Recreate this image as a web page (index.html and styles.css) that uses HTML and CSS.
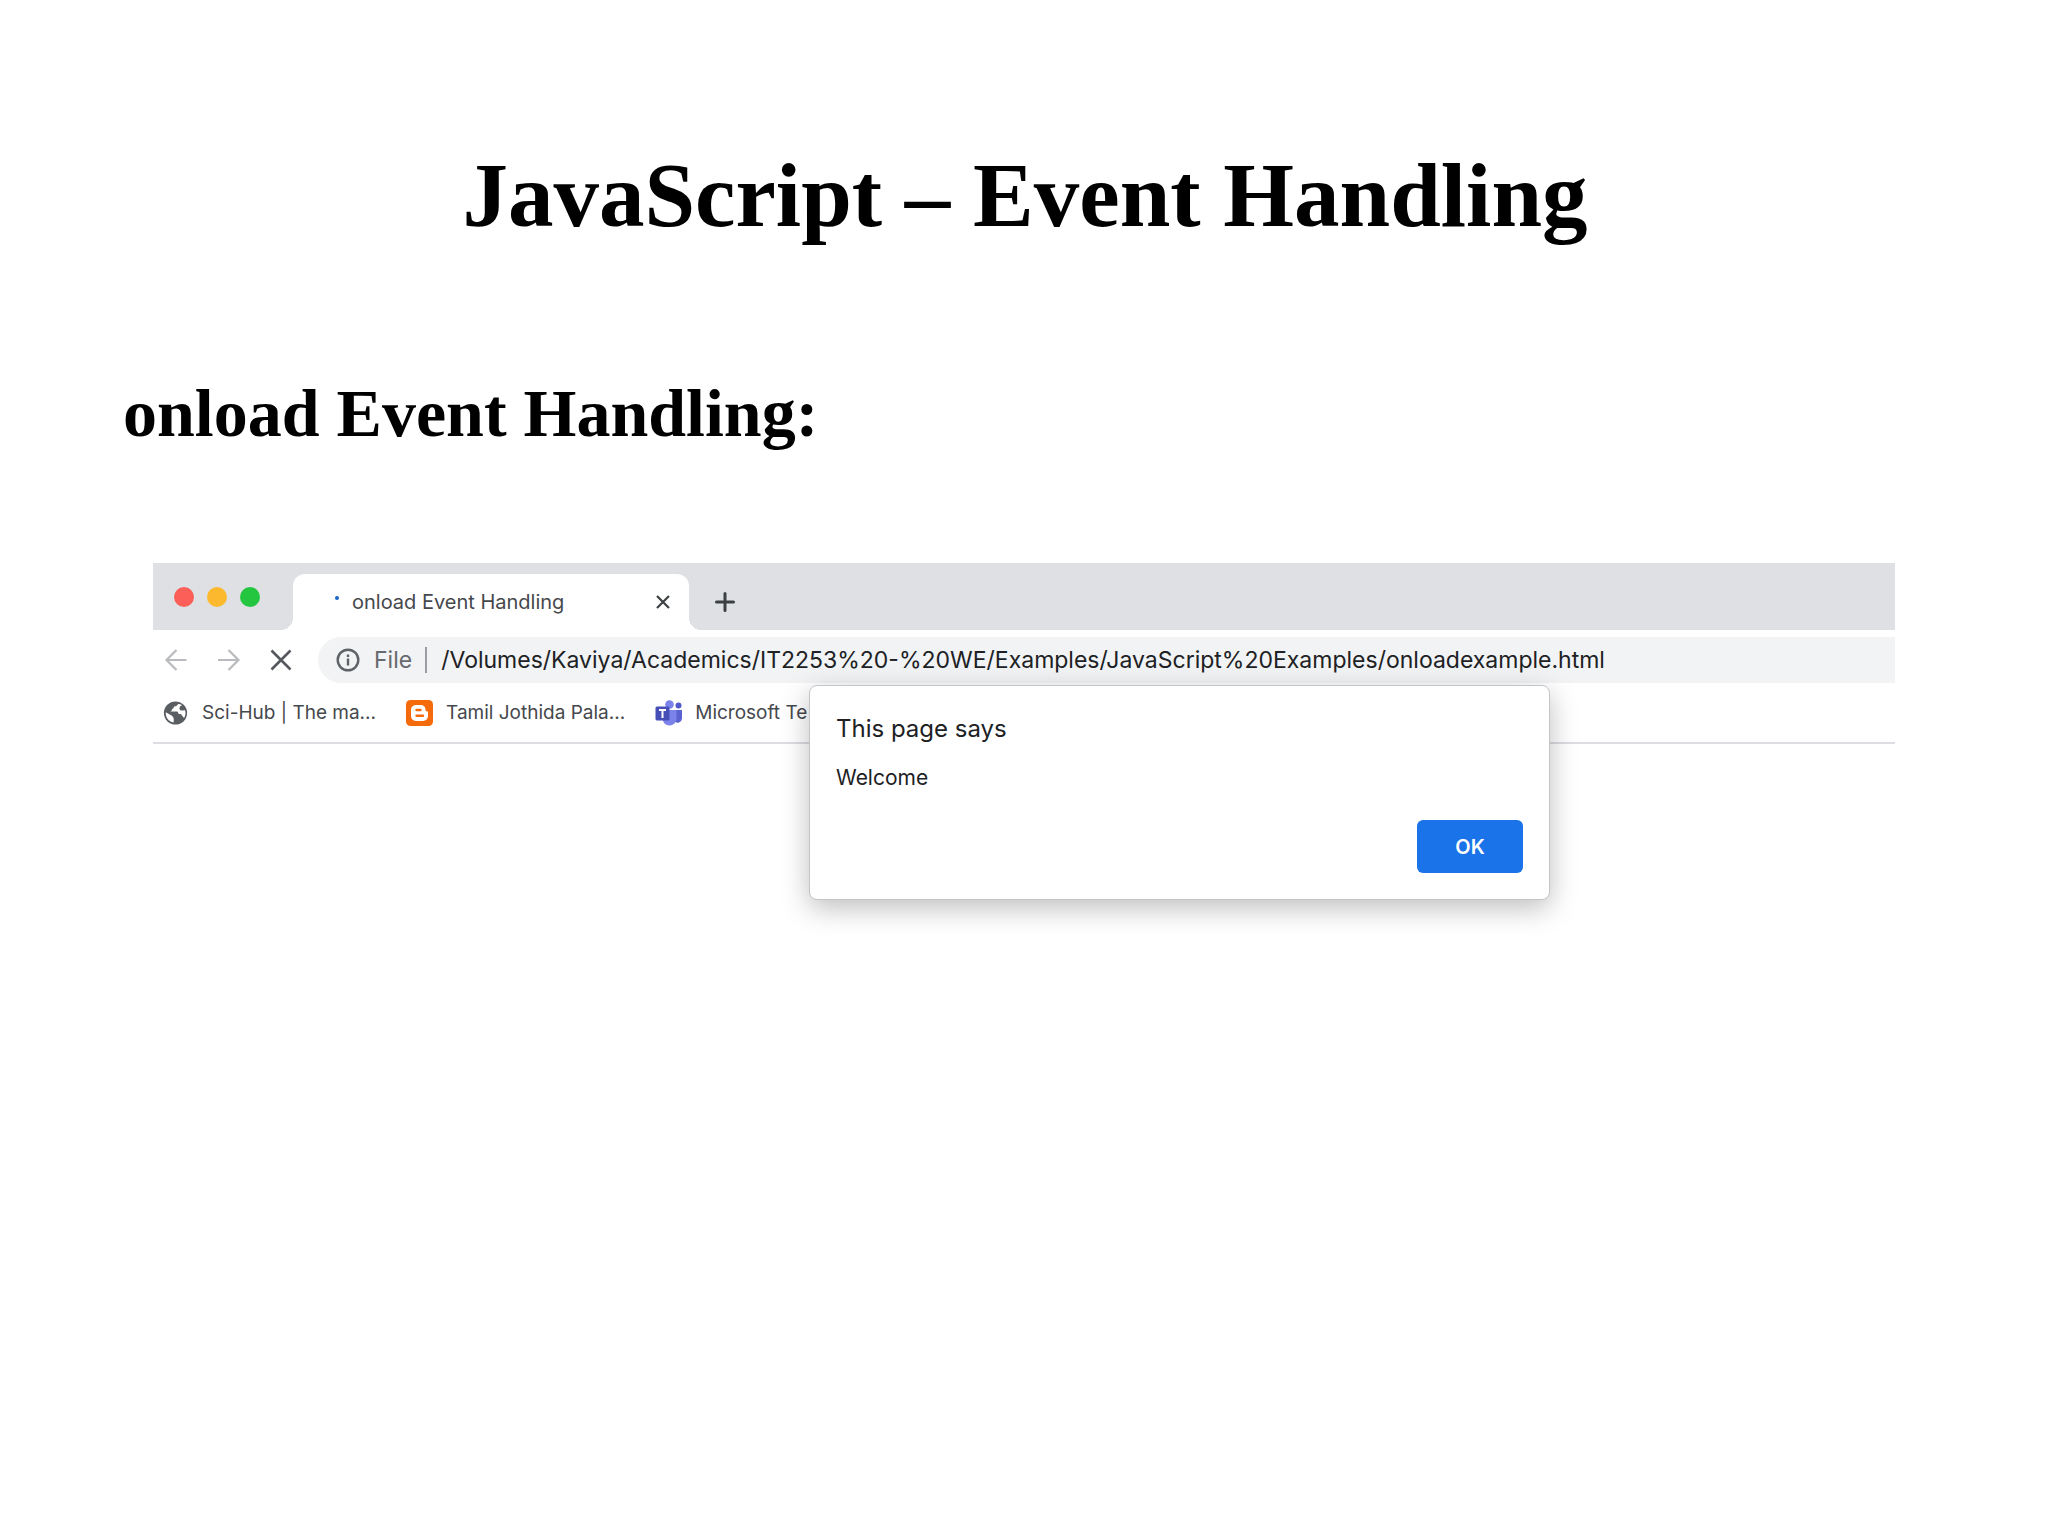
FILE: index.html
```html
<!DOCTYPE html>
<html lang="en">
<head>
<meta charset="utf-8">
<title>JavaScript – Event Handling</title>
<link rel="stylesheet" href="styles.css">
</head>
<body>
<main class="slide">
  <h1 class="slide-title">JavaScript – Event Handling</h1>
  <h2 class="slide-subtitle">onload Event Handling:</h2>

  <section class="browser">
    <div class="tab-strip">
      <div class="lights">
        <span class="light light-close"></span>
        <span class="light light-min"></span>
        <span class="light light-max"></span>
      </div>
      <div class="tab">
        <span class="spinner"></span>
        <span class="tab-title">onload Event Handling</span>
        <button class="icon-button" type="button" aria-label="Close tab">
          <svg width="28" height="28" viewBox="0 0 28 28" fill="none" stroke="#3c4043" stroke-width="2.2"><path d="M8 8l12 12M20 8L8 20"/></svg>
        </button>
      </div>
      <button class="icon-button new-tab" type="button" aria-label="New tab">
        <svg width="28" height="28" viewBox="0 0 28 28" fill="none" stroke="#3c4043" stroke-width="3" stroke-linecap="round"><path d="M14 5.500v17M5.500 14h17"/></svg>
      </button>
    </div>

    <div class="toolbar">
      <button class="icon-button" type="button" aria-label="Back">
        <svg width="28" height="28" viewBox="0 0 28 28" fill="none" stroke="#b9bbbe" stroke-width="2.2"><path d="M24.500 14H4.500M14.500 4L4.500 14l10 10"/></svg>
      </button>
      <button class="icon-button" type="button" aria-label="Forward">
        <svg width="28" height="28" viewBox="0 0 28 28" fill="none" stroke="#b9bbbe" stroke-width="2.2"><path d="M4 14h20.500M14.500 4l10 10-10 10"/></svg>
      </button>
      <button class="icon-button" type="button" aria-label="Stop">
        <svg width="28" height="28" viewBox="0 0 28 28" fill="none" stroke="#55585c" stroke-width="2.6"><path d="M5.500 4.500l19 19M24.500 4.500l-19 19"/></svg>
      </button>
      <div class="omnibox">
        <svg width="28" height="28" viewBox="0 0 28 28" fill="none" stroke="#5f6368" stroke-width="2.4"><circle cx="14" cy="14" r="10.300"/><path d="M14 12.500v7M14 8.500v2.500"/></svg>
        <label class="scheme" for="url">File</label>
        <input class="url" id="url" type="text" value="/Volumes/Kaviya/Academics/IT2253%20-%20WE/Examples/JavaScript%20Examples/onloadexample.html">
      </div>
    </div>

    <nav class="bookmarks">
      <a class="bookmark" href="#sci-hub">
        <svg width="28" height="28" viewBox="0 0 28 28"><circle cx="14.500" cy="14" r="11.600" fill="#5a5d61"/><path d="M4.800 13.200l6.200 3.600 1.700 2.300v4.400C7.500 22.600 4.500 18.500 4.800 13.200zM17 5.100c-.4 1.600-2 2.600-4 2.500-.4 1.300-.2 2-1.800 2.300-.2 1.500-1.200 2-2 2.600h6.600c1.400.1 1.500 1.600 1.800 2.600h1.800c1.500.2 1.500 2 2.600 2.700l1 1.200c1.600-2.200 2-5 1-7.800l-2.500.4c-2.200.2-3.300-1.200-3-2.900.3-1.600 1.800-1.700 2.500-2.600A9 9 0 0 0 17 5.100z" fill="#fff"/></svg>
        <span>Sci-Hub | The ma...</span>
      </a>
      <a class="bookmark" href="#tamil-jothida">
        <svg width="28" height="28" viewBox="0 0 28 28"><rect x="1" y="1" width="27" height="26" rx="4.500" fill="#f56a0b"/><path d="M11 6h4.500c3 0 5 2 5 4.700 0 1 .4 1.500 1.300 1.500.8 0 1.200.4 1.200 1.200v3.400c0 3-2 5.200-5 5.200h-7c-3 0-5-2.200-5-5.200v-5.600C6 8.200 8 6 11 6z" fill="#fff"/><path d="M11.500 11h4M11.500 16.800h6.500" stroke="#f56a0b" stroke-width="2.400" stroke-linecap="round"/></svg>
        <span>Tamil Jothida Pala...</span>
      </a>
      <a class="bookmark" href="#teams">
        <svg width="28" height="28" viewBox="0 0 28 28"><circle cx="15.500" cy="5.500" r="4.300" fill="#7b83eb"/><circle cx="24.500" cy="6.500" r="3" fill="#5059c9"/><path d="M20 11h8v8a4.500 4.500 0 0 1-8 3z" fill="#5a63cf"/><path d="M8.500 11h14v8.500a7 7 0 0 1-14 0z" fill="#7b83eb"/><rect x="1.500" y="7.500" width="14" height="14" rx="1.500" fill="#464eb8"/><path d="M5 11h7M8.500 11v8" stroke="#fff" stroke-width="2"/></svg>
        <span>Microsoft Te</span>
      </a>
    </nav>

    <div class="dialog" role="alertdialog" aria-labelledby="dialog-title" aria-describedby="dialog-text">
      <h3 class="dialog-title" id="dialog-title">This page says</h3>
      <p class="dialog-text" id="dialog-text">Welcome</p>
      <div class="dialog-actions">
        <button class="ok-button" type="button">OK</button>
      </div>
    </div>
  </section>
</main>
</body>
</html>
```
FILE: styles.css
```css
* { box-sizing: border-box; }

body {
  margin: 0;
  background: #fff;
  color: #000;
  font-family: Inter, "Liberation Sans", sans-serif;
}

.slide {
  min-height: 100vh;
  padding: 144px 153px 0 123px;
}

.slide-title,
.slide-subtitle {
  margin: 0;
  font-family: "Liberation Serif", "Times New Roman", serif;
  font-weight: 700;
}

.slide-title {
  padding-left: 32px;
  font-size: 91px;
  line-height: 104px;
  text-align: center;
}

.slide-subtitle {
  margin-top: 125px;
  font-size: 68px;
  line-height: 80px;
}

.browser {
  position: relative;
  margin: 110px 0 0 30px;
  padding-bottom: 200px;
}

.tab-strip {
  display: flex;
  align-items: flex-end;
  height: 67px;
  background: #dee0e3;
}

.lights {
  display: flex;
  align-self: center;
  gap: 13px;
  width: 140px;
  padding-left: 21px;
}

.light {
  width: 20px;
  height: 20px;
  border-radius: 50%;
}

.light-close { background: #fb5f57; }
.light-min { background: #fcb92d; }
.light-max { background: #25c63f; }

.tab {
  position: relative;
  display: flex;
  align-items: center;
  width: 396px;
  height: 56px;
  padding: 0 12px 0 42px;
  border-radius: 12px 12px 0 0;
  background: #fff;
}

/* Concave corners where the tab meets the toolbar */
.tab::before,
.tab::after {
  content: "";
  position: absolute;
  bottom: 0;
  width: 12px;
  height: 12px;
}

.tab::before {
  right: 100%;
  background: radial-gradient(circle at 0 0, transparent 12px, #fff 12px);
}

.tab::after {
  left: 100%;
  background: radial-gradient(circle at 100% 0, transparent 12px, #fff 12px);
}

.spinner {
  width: 4px;
  height: 4px;
  margin: 0 13px 8px 0;
  border-radius: 50%;
  background: #1a66c9;
}

.tab-title {
  flex: 1;
  color: #45484c;
  font-size: 20px;
}

.icon-button {
  display: flex;
  width: 28px;
  height: 28px;
  padding: 0;
  border: 0;
  background: none;
}

.new-tab {
  margin: 0 0 14px 22px;
}

.toolbar {
  display: flex;
  align-items: center;
  gap: 24px;
  padding: 7px 0 0 9px;
}

.omnibox {
  display: flex;
  flex: 1;
  align-items: center;
  height: 46px;
  padding-left: 16px;
  border-radius: 23px 0 0 23px;
  background: #f1f3f4;
}

.scheme {
  margin-left: 12px;
  padding-right: 13px;
  border-right: 2px solid #9a9da1;
  color: #66696d;
  font-size: 23px;
  line-height: 26px;
}

.url {
  flex: 1;
  min-width: 0;
  margin-left: 14px;
  padding: 0;
  border: 0;
  background: none;
  color: #202124;
  font-family: inherit;
  font-size: 23px;
}

.bookmarks {
  display: flex;
  align-items: center;
  gap: 29px;
  height: 61px;
  padding-left: 8px;
  border-bottom: 2px solid #dcdde0;
}

.bookmark {
  display: flex;
  align-items: center;
  gap: 13px;
  color: #45484c;
  font-size: 19px;
  white-space: nowrap;
  text-decoration: none;
}

.dialog {
  position: absolute;
  top: 122px;
  left: 656px;
  width: 741px;
  padding: 27px 26px 26px 26px;
  border: 1px solid #c4c5c7;
  border-radius: 8px;
  background: #fff;
  box-shadow: 0 8px 28px rgba(0, 0, 0, 0.26);
}

.dialog-title {
  margin: 0;
  color: #202124;
  font-size: 24px;
  font-weight: 400;
  line-height: 32px;
}

.dialog-text {
  margin: 18px 0 0;
  color: #202124;
  font-size: 21px;
  line-height: 30px;
}

.dialog-actions {
  display: flex;
  justify-content: flex-end;
  margin-top: 27px;
}

.ok-button {
  width: 106px;
  height: 53px;
  border: 0;
  border-radius: 6px;
  background: #1a73e8;
  color: #fff;
  font-family: inherit;
  font-size: 20px;
  font-weight: 600;
}
```
